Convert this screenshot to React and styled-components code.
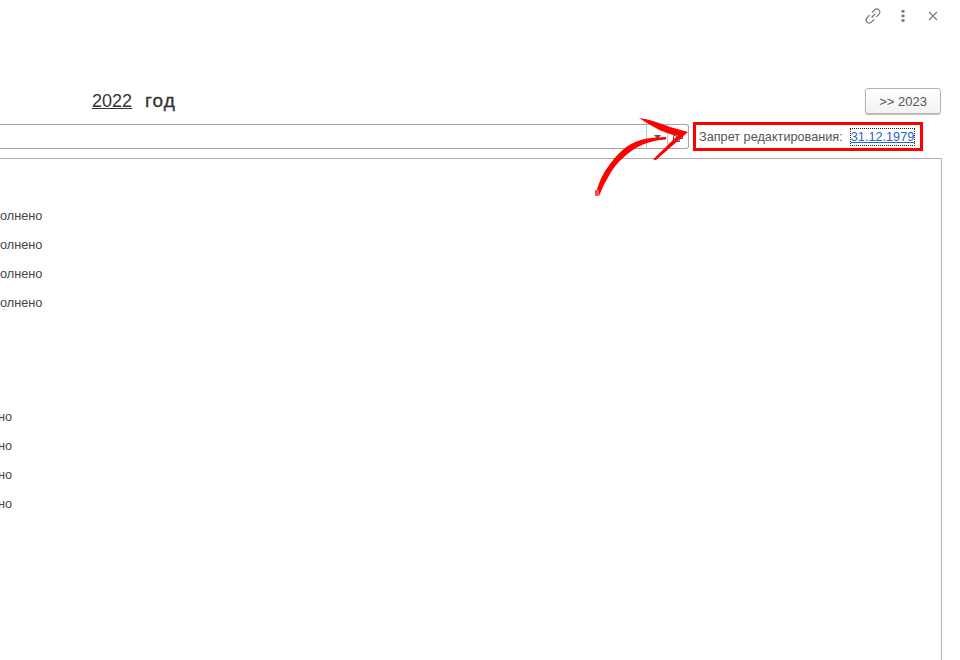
import React from 'react';
import styled, { createGlobalStyle } from 'styled-components';

const GlobalStyle = createGlobalStyle`
  html, body {
    margin: 0;
    padding: 0;
    background: #fff;
  }
  body {
    font-family: "Liberation Sans", Arial, sans-serif;
    color: #333;
  }
`;

const doneRows = ['олнено', 'олнено', 'олнено', 'олнено'];
const shortRows = ['но', 'но', 'но', 'но'];

const App = () => {
  return (
    <Page>
      <GlobalStyle />
      <TopBar>
        <TopIcon>
          <svg width="18" height="18" viewBox="0 0 18 18" fill="none" stroke="#777" strokeWidth="1.2">
            <path d="M7.5 10.5 L11 7" />
            <path d="M8 5.5 L10.6 2.9 a3 3 0 0 1 4.4 4.3 L12.4 9.8" />
            <path d="M10 12.5 L7.4 15.1 a3 3 0 0 1 -4.4 -4.3 L5.6 8.2" />
          </svg>
        </TopIcon>
        <TopIcon>
          <svg width="4" height="12" viewBox="0 0 4 12" fill="#777">
            <rect x="0.5" y="0" width="3" height="2.6" />
            <rect x="0.5" y="4.6" width="3" height="2.6" />
            <rect x="0.5" y="9.2" width="3" height="2.6" />
          </svg>
        </TopIcon>
        <TopIcon>
          <svg width="10" height="10" viewBox="0 0 10 10" stroke="#777" strokeWidth="1.1">
            <path d="M1 1 L9 9 M9 1 L1 9" />
          </svg>
        </TopIcon>
      </TopBar>

      <YearRow>
        <YearTitle>
          <YearLink>2022</YearLink>
          <YearWord>год</YearWord>
        </YearTitle>
        <NextButton>&gt;&gt; 2023</NextButton>
      </YearRow>

      <FilterRow>
        <SearchField>
          <FieldCell>
            <svg width="7" height="4" viewBox="0 0 7 4" fill="#555">
              <path d="M0 0 H7 L3.5 4 Z" />
            </svg>
          </FieldCell>
          <FieldCell>
            <svg width="10" height="10" viewBox="0 0 10 10" fill="none" stroke="#555">
              <path d="M2.5 3.5 H0.5 V9.5 H6.5 V7.5 M3.5 0.5 H9.5 V6.5 H3.5 Z" />
            </svg>
          </FieldCell>
        </SearchField>
        <LockBox>
          <LockLabel>Запрет редактирования:</LockLabel>
          <LockDate>31.12.1979</LockDate>
        </LockBox>
      </FilterRow>

      <Content>
        <RowGroup>
          {doneRows.map((text, idx) => (
            <StatusRow key={idx}>{text}</StatusRow>
          ))}
        </RowGroup>
        <RowGroup $second>
          {shortRows.map((text, idx) => (
            <StatusRow key={idx}>{text}</StatusRow>
          ))}
        </RowGroup>
      </Content>

      <ArrowOverlay width="110" height="90" viewBox="0 0 110 90" fill="#ff0000">
        <path d="M5.5 85 Q10 66 20 54 Q28 43 37 36.5 Q46 30.5 57 28.5 Q66 27 76 27 L76 29.5 Q64 30 53 34.5 Q42 39 33 48 Q25 55 20 64 Q13 75 9 86 Z" />
        <path d="M49 8 Q57 9 63 11 Q72 14 80 17 L98 22 L66 50 L63 49.5 L85 28 L88 25.5 Q82 25 77 23 Q70 21 63 16.5 Q55 12 49 8 Z" />
        <rect x="5" y="80" width="4" height="6" fill="#ff5050" />
      </ArrowOverlay>
    </Page>
  );
};

export default App;

const Page = styled.div`
  position: relative;
  width: 960px;
  height: 660px;
  overflow: hidden;
  background: #fff;
`;

const TopBar = styled.div`
  display: flex;
  justify-content: flex-end;
  align-items: center;
  gap: 12px;
  height: 32px;
  padding-right: 18px;
`;

const TopIcon = styled.div`
  display: flex;
  justify-content: center;
  align-items: center;
  width: 18px;
  height: 18px;
`;

const YearRow = styled.div`
  display: flex;
  justify-content: space-between;
  align-items: center;
  height: 26px;
  margin-top: 56px;
  padding: 0 19px 0 92px;
`;

const YearTitle = styled.div`
  display: flex;
  align-items: baseline;
  gap: 13px;
  font-size: 18px;
`;

const YearLink = styled.span`
  color: #333;
  text-decoration: underline;
`;

const YearWord = styled.span`
  color: #333;
  font-size: 19px;
  letter-spacing: 1px;
  -webkit-text-stroke: 0.3px #333;
`;

const NextButton = styled.button`
  box-sizing: border-box;
  width: 76px;
  height: 26px;
  padding: 0;
  background: linear-gradient(#fff, #f2f2f2);
  border: 1px solid #b5b5b5;
  border-radius: 3px;
  box-shadow: 0 1px 1px #bbb;
  font: 13px "Liberation Sans", Arial, sans-serif;
  color: #555;
`;

const FilterRow = styled.div`
  display: flex;
  align-items: flex-start;
  gap: 4px;
  height: 36px;
  margin-top: 8px;
`;

const SearchField = styled.div`
  box-sizing: border-box;
  display: flex;
  justify-content: flex-end;
  width: 689px;
  height: 25px;
  margin-top: 2px;
  background: #fff;
  border: 1px solid #a5a5a5;
  border-left: none;
  border-radius: 0 3px 3px 0;
`;

const FieldCell = styled.div`
  display: flex;
  justify-content: center;
  align-items: center;
  width: 20px;
  border-left: 1px solid #c4c4c4;
`;

const LockBox = styled.div`
  box-sizing: border-box;
  display: flex;
  align-items: center;
  gap: 8px;
  width: 230px;
  height: 29px;
  padding-left: 3px;
  border: 3px solid #ff0000;
  font-size: 12.7px;
`;

const LockLabel = styled.span`
  color: #555;
`;

const LockDate = styled.a`
  padding: 1px 0;
  color: #2a62c8;
  text-decoration: underline;
  outline: 1px dotted #222;
`;

const Content = styled.div`
  box-sizing: border-box;
  width: 942px;
  height: 520px;
  padding-top: 48px;
  border: 1px solid #b0b0b0;
  border-left: none;
`;

const RowGroup = styled.div`
  display: flex;
  flex-direction: column;
  margin-top: ${({ $second }) => ($second ? '85px' : '0')};
  margin-left: ${({ $second }) => ($second ? '-2px' : '0')};
`;

const StatusRow = styled.div`
  height: 29px;
  line-height: 18px;
  font-size: 12.7px;
  color: #444;
`;

const ArrowOverlay = styled.svg`
  position: absolute;
  left: 590px;
  top: 110px;
`;
